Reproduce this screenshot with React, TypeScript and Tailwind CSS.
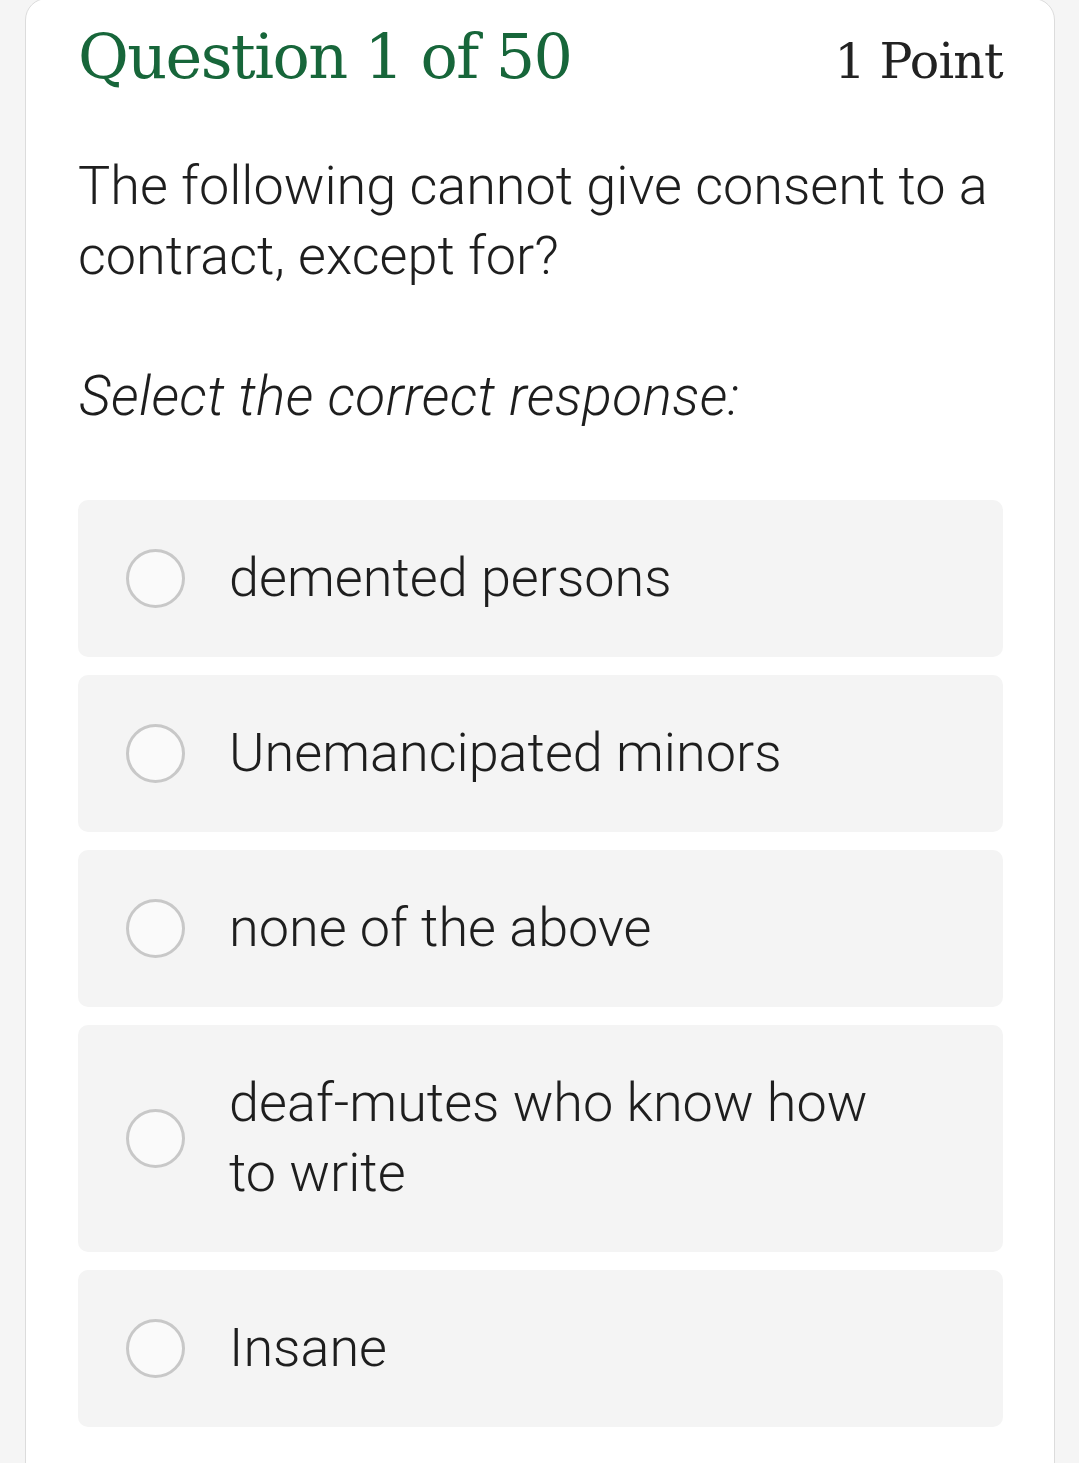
import { useState } from 'react';

const options = [
  'demented persons',
  'Unemancipated minors',
  'none of the above',
  'deaf-mutes who know how to write',
  'Insane',
];

const QuizCard = () => {
  const [selected, setSelected] = useState<number | null>(null);

  return (
    <div className="min-h-screen bg-[#f5f5f5] pl-[25px] pr-[24px] overflow-hidden">
      <div className="bg-white border border-[#dcdcdc] rounded-t-[22px] pl-[52px] pr-[51px] pb-[40px] h-[1500px] -mt-[2px]">
        {/* header */}
        <div className="flex items-baseline justify-between pt-[18px]">
          <h1 className="font-['DejaVu_Serif',serif] text-[#17663a] text-[62px] leading-[80px] tracking-[-1.6px]">
            Question 1 of 50
          </h1>
          <span className="font-['DejaVu_Serif',serif] text-[#222] text-[49px] tracking-[-0.8px]">1 Point</span>
        </div>

        <p className="font-['Roboto',sans-serif] font-light text-[#1e1e1e] text-[54px] leading-[70px] mt-[52px]">
          The following cannot give consent to a contract, except for?
        </p>

        <p className="font-['Roboto',sans-serif] font-light italic text-[#1e1e1e] text-[55px] leading-[70px] mt-[70px] pl-[1px] tracking-[0.4px]">
          Select the correct response:
        </p>

        <div className="flex flex-col gap-[18px] mt-[69px]">
          {options.map((opt, i) => (
            <button
              key={opt}
              onClick={() => setSelected(i)}
              className="flex items-center bg-[#f4f4f4] rounded-[10px] min-h-[157px] pl-[48px] pr-[40px] py-[43.5px] text-left"
            >
              <span
                className={`shrink-0 w-[59px] h-[59px] rounded-full border-[3px] ${
                  selected === i ? 'border-[#17663a] bg-[#17663a]' : 'border-[#c8c8c8] bg-[#fafafa]'
                }`}
              />
              <span className="ml-[44px] max-w-[660px] font-['Roboto',sans-serif] font-light text-[#1e1e1e] text-[54px] leading-[70px]">
                {opt}
              </span>
            </button>
          ))}
        </div>
      </div>
    </div>
  );
};

export default function App() {
  return <QuizCard />;
}
